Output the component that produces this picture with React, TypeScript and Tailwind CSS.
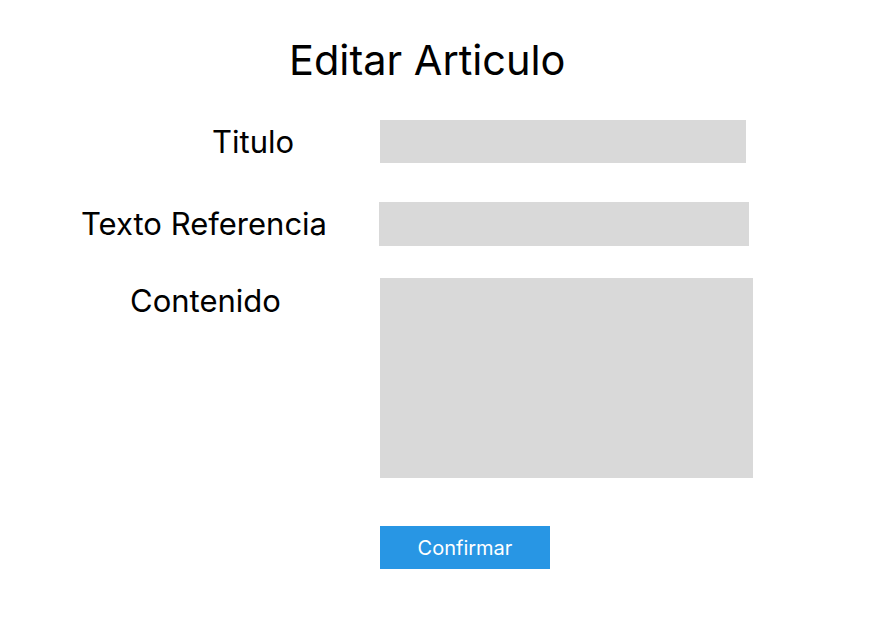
import React from "react";

export default function App() {
  return (
    <div className="w-[894px] h-[624px] bg-white text-black" style={{ fontFamily: "Inter, 'Noto Sans', sans-serif" }}>
      <div className="pt-[35px] pl-[289px] h-[85px] text-[41.5px] leading-[50px]">Editar Articulo</div>
      <div className="flex mt-[35px] h-[43px] items-center">
        <div className="w-[379px] pl-[212px] text-[31px] leading-[38px]">Titulo</div>
        <div className="ml-[1px] w-[366px] h-[43px] bg-[#d9d9d9]" />
      </div>
      <div className="flex mt-[39px] h-[44px] items-center">
        <div className="w-[379px] pl-[81px] text-[31px] leading-[38px]">Texto Referencia</div>
        <div className="w-[370px] h-[44px] bg-[#d9d9d9]" />
      </div>
      <div className="flex mt-[32px]">
        <div className="w-[380px] pl-[130px] pt-[4px] text-[31px] leading-[38px]">Contenido</div>
        <div className="w-[373px] h-[200px] bg-[#d9d9d9]" />
      </div>
      <div className="mt-[48px] pl-[380px]">
        <button className="w-[170px] h-[43px] bg-[#2896e4] text-white text-[20px] leading-[24px]">Confirmar</button>
      </div>
    </div>
  );
}
